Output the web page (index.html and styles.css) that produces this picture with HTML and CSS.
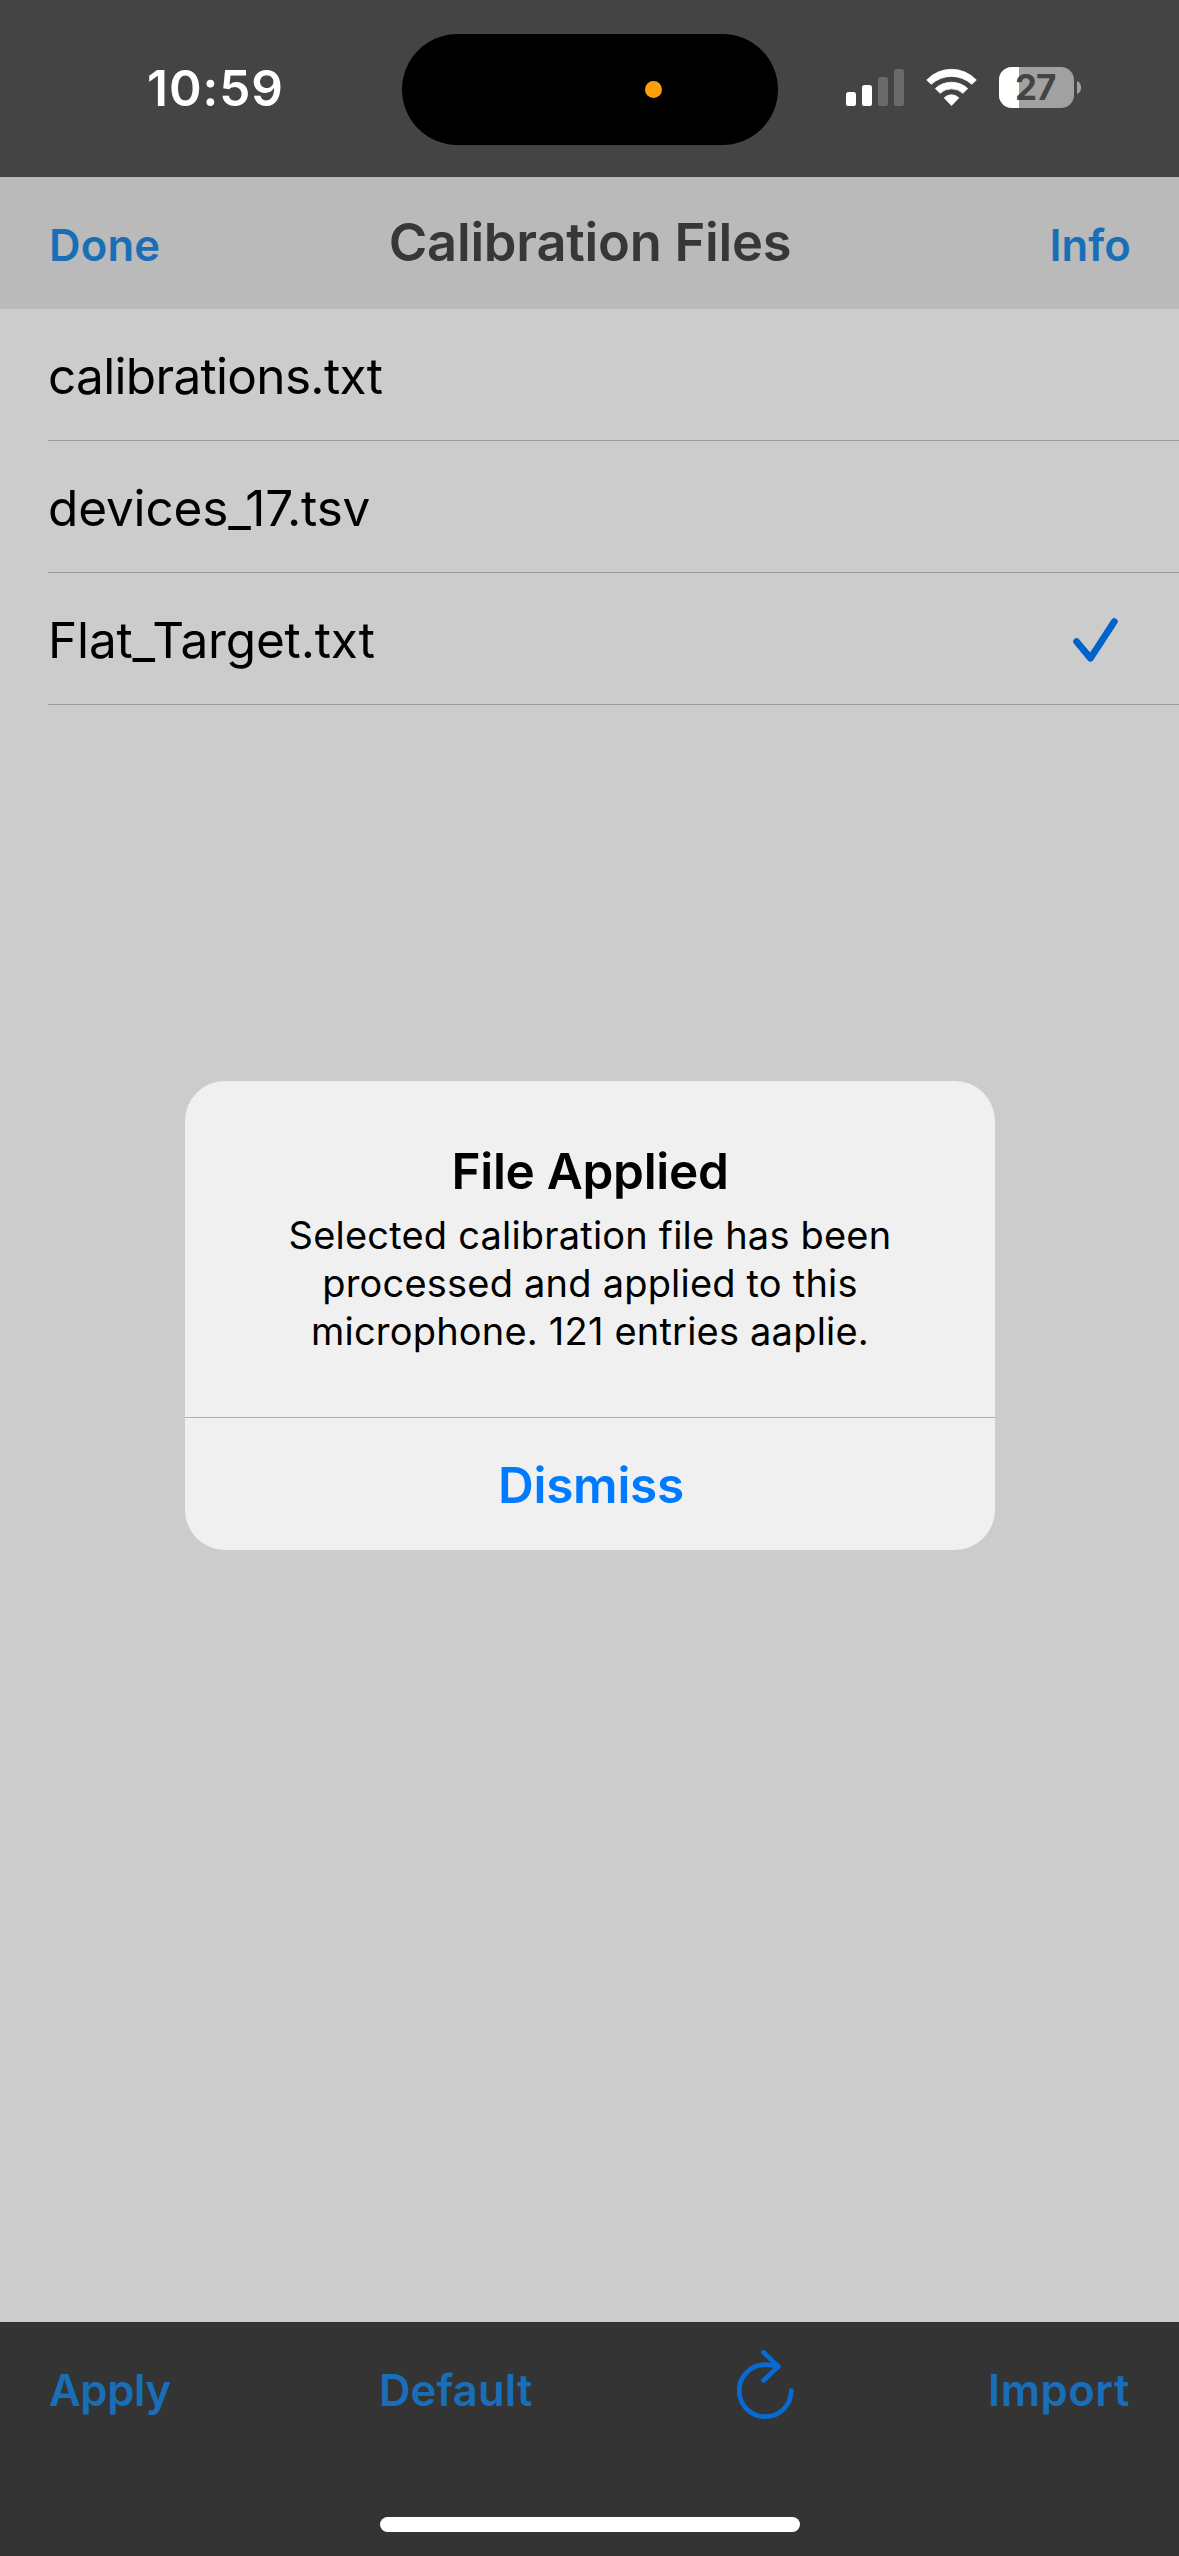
FILE: index.html
```html
<!DOCTYPE html>
<html lang="en">
<head>
<meta charset="utf-8">
<title>Calibration Files</title>
<link rel="stylesheet" href="styles.css">
</head>
<body>
<div class="screen">
  <header class="status">
    <span class="status__time">10:59</span>
    <div class="island"><span class="island__dot"></span></div>
    <div class="status__icons">
      <svg width="58" height="42" viewBox="0 0 58 42">
        <g fill="#fff">
          <rect x="0" y="25" width="10" height="14" rx="2.6"/>
          <rect x="16" y="18" width="10" height="21" rx="2.6"/>
        </g>
        <g fill="#6a6a6a">
          <rect x="32" y="10" width="10" height="29" rx="2.6"/>
          <rect x="48" y="2" width="10" height="37" rx="2.6"/>
        </g>
      </svg>
      <svg width="51" height="42" viewBox="0 -2 51 42">
        <g fill="#fff" stroke="#fff" stroke-width=".8" stroke-linejoin="round">
          <path d="M.7 11A34.1 34.1 0 0 1 50.3 11L45.8 15.3A30 30 0 0 0 5.2 15.3Z"/>
          <path d="M9.3 19.6A23.7 23.7 0 0 1 41.7 19.6L36.9 24.3A16.8 16.8 0 0 0 14.1 24.3Z"/>
          <path d="M18.2 28.8A10.3 10.3 0 0 1 32.8 28.8L25.5 36.6Z"/>
        </g>
      </svg>
      <svg width="83" height="42" viewBox="0 0 83 42">
        <defs><clipPath id="cell"><rect width="75" height="41" rx="13"/></clipPath></defs>
        <g clip-path="url(#cell)">
          <rect width="75" height="41" fill="#a1a1a1"/>
          <rect width="20" height="41" fill="#fff"/>
        </g>
        <path d="M78 14C83.4 16 83.4 25 78 27Z" fill="#a1a1a1"/>
        <text class="battery__level" x="16" y="33">27</text>
      </svg>
    </div>
  </header>

  <nav class="navbar">
    <a class="action navbar__done">Done</a>
    <h1 class="navbar__title">Calibration Files</h1>
    <a class="action navbar__info">Info</a>
  </nav>

  <main class="files">
    <div class="file file--first"><span>calibrations.txt</span></div>
    <div class="file"><span>devices_17.tsv</span></div>
    <div class="file">
      <span>Flat_Target.txt</span>
      <svg class="file__check" width="46" height="46" viewBox="0 0 46 46">
        <path d="M3.6 23.6L17.5 40.2L41.3 3.6" fill="none" stroke="#0062cc" stroke-width="6.8" stroke-linecap="round" stroke-linejoin="round"/>
      </svg>
    </div>
  </main>

  <footer class="toolbar">
    <div class="toolbar__items">
      <a class="action toolbar__apply">Apply</a>
      <a class="action toolbar__default">Default</a>
      <svg class="toolbar__reload" width="57" height="70" viewBox="0 0 57 70">
        <g fill="none" stroke="#086bd3" stroke-width="4.7" stroke-linecap="round" stroke-linejoin="round">
          <path d="M54.2 40.7A26 26 0 1 1 28.2 14.7Q34 14.7 41 16.3"/>
          <path d="M26.6 2.4L41.2 16.5L26.6 30.5"/>
        </g>
      </svg>
      <a class="action toolbar__import">Import</a>
    </div>
    <div class="home"></div>
  </footer>

  <div class="alert">
    <div class="alert__body">
      <h2 class="alert__title">File Applied</h2>
      <p class="alert__text">Selected calibration file has been processed and applied to this microphone. 121 entries aaplie.</p>
    </div>
    <a class="alert__button">Dismiss</a>
  </div>
</div>
</body>
</html>
```
FILE: styles.css
```css
* { box-sizing: border-box; margin: 0; }

body { font-family: "Inter", "Liberation Sans", sans-serif; color: #000; }

.screen {
  position: relative;
  display: flex;
  flex-direction: column;
  width: 1179px;
  height: 2556px;
  background: #ccc;
  overflow: hidden;
}

/* Status bar */
.status {
  display: grid;
  grid-template-columns: 402px 376px 401px;
  height: 177px;
  background: #444;
  color: #fff;
}
.status__time {
  padding-left: 147px;
  font-size: 49.5px;
  font-weight: 600;
  line-height: 176px;
  letter-spacing: 0.95px;
}
.island {
  display: flex;
  align-items: center;
  justify-content: flex-end;
  height: 111px;
  margin-top: 34px;
  padding-right: 116px;
  border-radius: 56px;
  background: #000;
}
.island__dot {
  width: 17px;
  height: 17px;
  border-radius: 50%;
  background: #ff9f0a;
}
.status__icons {
  display: flex;
  align-items: center;
  gap: 22px;
  height: 176px;
  padding-left: 68px;
}
.battery__level {
  font-size: 35px;
  font-weight: 700;
  letter-spacing: -1px;
  fill: #444;
}

/* Navigation bar */
.navbar {
  display: grid;
  grid-template-columns: 1fr auto 1fr;
  align-items: baseline;
  height: 132px;
  padding: 0 48px 0 49px;
  background: #bababa;
}
.navbar__title {
  font-size: 52.4px;
  font-weight: 600;
  line-height: 130px;
  letter-spacing: -0.23px;
  color: #373737;
}
.action {
  font-size: 43.6px;
  font-weight: 600;
  line-height: 56px;
  color: #196eb8;
}
.navbar__done { letter-spacing: 0.2px; }
.navbar__info { text-align: right; letter-spacing: 0.1px; }

/* File list */
.files { flex: 1; padding-left: 48px; }
.file {
  display: flex;
  align-items: center;
  justify-content: space-between;
  height: 132px;
  padding: 3px 60px 0 0;
  border-bottom: 1px solid #9d9d9d;
  font-size: 49.5px;
  line-height: 128px;
  letter-spacing: -0.15px;
}
.file--first { letter-spacing: -0.68px; }
.file__check { margin-top: 1px; }

/* Toolbar */
.toolbar {
  display: flex;
  flex-direction: column;
  height: 234px;
  background: #343434;
}
.toolbar__items {
  display: flex;
  align-items: center;
  height: 137px;
  padding-left: 49px;
}
.toolbar__apply { width: 330px; letter-spacing: -0.35px; }
.toolbar__default { width: 358px; letter-spacing: 0.14px; }
.toolbar__reload { margin-bottom: 11px; }
.toolbar__import { margin-left: 194px; letter-spacing: 0.57px; }
.home {
  width: 420px;
  height: 15px;
  margin: 58px auto 0;
  border-radius: 8px;
  background: #fff;
}

/* Alert */
.alert {
  position: absolute;
  top: 1081px;
  left: 185px;
  width: 810px;
  height: 469px;
  border-radius: 40px;
  background: #f0f0f0;
  text-align: center;
}
.alert__body {
  height: 337px;
  padding: 60px 80px 0;
  border-bottom: 1px solid #b0b0b0;
}
.alert__title {
  font-size: 49.5px;
  font-weight: 600;
  line-height: 60px;
  letter-spacing: -0.3px;
}
.alert__text {
  margin-top: 10px;
  font-size: 38px;
  line-height: 48px;
  letter-spacing: 0.2px;
}
.alert__button {
  display: block;
  padding: 2px 0 0 2px;
  font-size: 49.5px;
  font-weight: 600;
  line-height: 130px;
  letter-spacing: -0.27px;
  color: #007aff;
}
```
